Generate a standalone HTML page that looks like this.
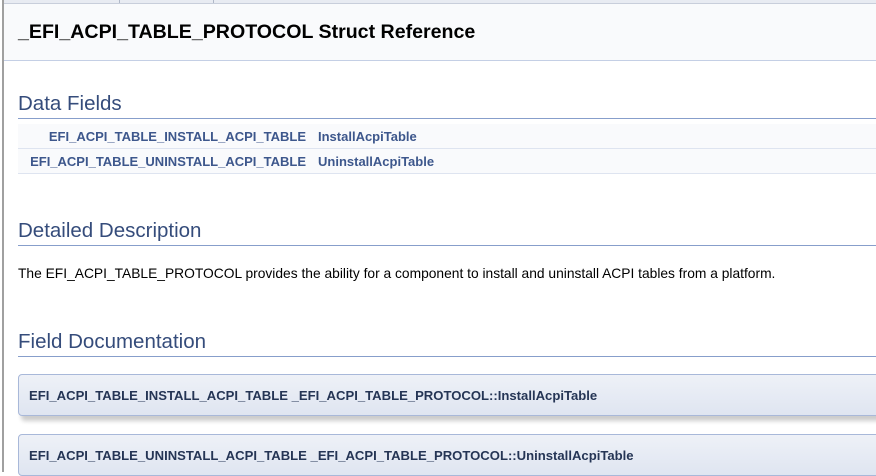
<!DOCTYPE html>
<html><head><style>
html,body{margin:0;padding:0;width:876px;height:472px;overflow:hidden;background:#fff;font-family:"Liberation Sans",sans-serif;}
.lb{position:absolute;left:2px;top:0;width:2px;height:472px;background:#a0a0a0;}
.top{position:absolute;left:4px;top:0;width:872px;height:3px;background:#e8ebf2;border-bottom:1px solid #c8cedb;}
.top i{position:absolute;top:0;width:1px;height:3px;background:#b0b8c8;}
.hdr{position:absolute;left:4px;top:4px;width:872px;height:56px;background:#f9fafc;border-bottom:1px solid #c4cfe5;}
.hdr h1{position:absolute;left:14px;top:17px;margin:0;font-size:19.6px;font-weight:bold;color:#000;}
h2{position:absolute;left:18px;margin:0;font-size:20.5px;font-weight:normal;color:#354c7b;width:858px;border-bottom:1px solid #879ecb;padding-bottom:2px;}
.row{position:absolute;left:18px;width:858px;height:24px;background:#f9fafc;border-bottom:1px solid #dee4f0;font-size:13px;font-weight:bold;color:#3d578c;}
.row .a{position:absolute;right:570px;top:5px;}
.row .b{position:absolute;left:300px;top:5px;}
p{position:absolute;left:18px;top:266px;margin:0;font-size:13.8px;color:#000;}
.box{position:absolute;left:18px;width:870px;height:40px;border:1px solid #a8b8d9;border-radius:4px;background:linear-gradient(#eef1f7,#dfe5f1);font-size:13.1px;font-weight:bold;color:#253555;}
.box span{position:absolute;left:10px;top:13px;}
</style></head><body>
<div class="lb"></div>
<div class="top"><i style="left:115px"></i><i style="left:209px"></i></div>
<div class="hdr"><h1>_EFI_ACPI_TABLE_PROTOCOL Struct Reference</h1></div>
<h2 style="top:92px">Data Fields</h2>
<div class="row" style="top:124px"><span class="a">EFI_ACPI_TABLE_INSTALL_ACPI_TABLE</span><span class="b">InstallAcpiTable</span></div>
<div class="row" style="top:149px"><span class="a">EFI_ACPI_TABLE_UNINSTALL_ACPI_TABLE</span><span class="b">UninstallAcpiTable</span></div>
<h2 style="top:219px">Detailed Description</h2>
<p>The EFI_ACPI_TABLE_PROTOCOL provides the ability for a component to install and uninstall ACPI tables from a platform.</p>
<h2 style="top:330px">Field Documentation</h2>
<div class="box" style="top:374px;box-shadow:3px 5px 4px rgba(0,0,0,0.2)"><span>EFI_ACPI_TABLE_INSTALL_ACPI_TABLE _EFI_ACPI_TABLE_PROTOCOL::InstallAcpiTable</span></div>
<div class="box" style="top:434px"><span>EFI_ACPI_TABLE_UNINSTALL_ACPI_TABLE _EFI_ACPI_TABLE_PROTOCOL::UninstallAcpiTable</span></div>
</body></html>
